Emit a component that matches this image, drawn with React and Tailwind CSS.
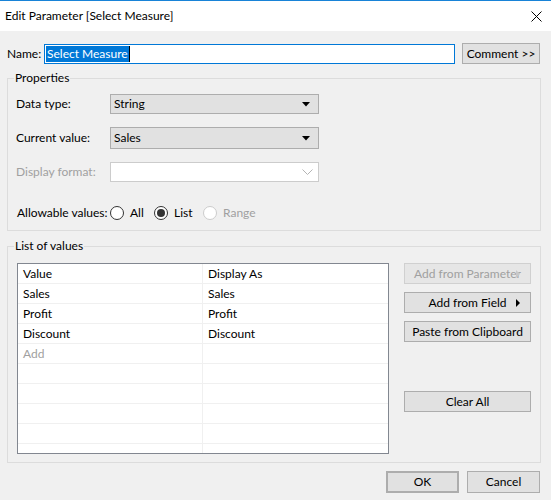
import React from 'react';

const FONT = { fontFamily: 'Lato, "Noto Sans", sans-serif' };

function DownTriangle() {
  return (
    <svg width="8" height="5" viewBox="0 0 8 5">
      <path d="M0 0 H8 L4 4.5 Z" fill="#000" />
    </svg>
  );
}

function Chevron() {
  return (
    <svg width="11" height="7" viewBox="0 0 11 7">
      <path d="M0.5 0.5 L5.5 5.5 L10.5 0.5" fill="none" stroke="#b4b4b4" strokeWidth="1" />
    </svg>
  );
}

function RightTriangle({ color }) {
  return (
    <svg width="4" height="8" viewBox="0 0 4 8">
      <path d="M0 0 L4 4 L0 8 Z" fill={color} />
    </svg>
  );
}

function Radio({ checked, disabled, label, className = '' }) {
  return (
    <label className={`flex items-center gap-[6px] ${className}`}>
      <span
        className={`w-[14px] h-[14px] rounded-full border bg-white flex items-center justify-center ${
          disabled ? 'border-[#cccccc]' : 'border-[#333333]'
        }`}
      >
        {checked && <span className="w-[8px] h-[8px] rounded-full bg-[#333333]" />}
      </span>
      <span className={disabled ? 'text-[#a0a0a0]' : 'text-black'}>{label}</span>
    </label>
  );
}

function Select({ value, className = '' }) {
  return (
    <div className={`w-[209px] h-[20px] border border-[#adadad] bg-[#e1e1e1] flex items-center justify-between pl-[3px] pr-[8px] ${className}`}>
      <span>{value}</span>
      <DownTriangle />
    </div>
  );
}

function Btn({ children, disabled, arrow, className = '' }) {
  return (
    <button
      className={`relative h-[21px] border flex items-center justify-center ${
        disabled
          ? 'border-[#d0d0d0] bg-[#e6e6e6] text-[#a0a0a0]'
          : 'border-[#adadad] bg-[#e1e1e1] text-black'
      } ${className}`}
    >
      {children}
      {arrow && (
        <span className="absolute right-[10px] top-[6px]">
          <RightTriangle color={disabled ? '#c8c8c8' : '#000'} />
        </span>
      )}
    </button>
  );
}

const ROWS = [
  ['Value', 'Display As'],
  ['Sales', 'Sales'],
  ['Profit', 'Profit'],
  ['Discount', 'Discount'],
  ['Add', ''],
  ['', ''],
  ['', ''],
  ['', ''],
  ['', ''],
  ['', ''],
];

export default function App() {
  return (
    <div style={FONT} className="w-[551px] h-[500px] bg-[#f0f0f0] text-[12px] leading-[16px] text-black border-t border-[#1883d7] overflow-hidden">
      {/* Title bar */}
      <div className="h-[30px] bg-white flex items-center justify-between pl-[5px] pr-[9px]">
        <span className="text-[12px]">Edit Parameter [Select Measure]</span>
        <svg width="11" height="11" viewBox="0 0 11 11">
          <path d="M0.5 0.5 L10.5 10.5 M10.5 0.5 L0.5 10.5" stroke="#000" strokeWidth="1" />
        </svg>
      </div>

      <div className="pl-[7px] pr-[10px]">
        {/* Name row */}
        <div className="flex items-center mt-[12px]">
          <span className="w-[37px]">Name:</span>
          <div className="w-[411px] h-[20px] border border-[#0078d7] bg-white flex items-center pl-[1px]">
            <span className="bg-[#0078d7] text-white px-[1px] border-r border-black">Select Measure</span>
          </div>
          <Btn className="ml-[7px] w-[78px] h-[20px]">Comment &gt;&gt;</Btn>
        </div>

        {/* Properties */}
        <fieldset className="mt-[6px] border border-[#dcdcdc] pl-[8px] pb-[9px]">
          <legend className="ml-[-2px] px-[1px]">Properties</legend>
          <div className="flex items-center mt-[8px]">
            <span className="w-[94px]">Data type:</span>
            <Select value="String" />
          </div>
          <div className="flex items-center mt-[13px]">
            <span className="w-[94px]">Current value:</span>
            <Select value="Sales" className="h-[22px]" />
          </div>
          <div className="flex items-center mt-[13px]">
            <span className="w-[94px] text-[#a0a0a0]">Display format:</span>
            <div className="w-[209px] h-[20px] border border-[#cccccc] bg-white flex items-center justify-end pr-[5px]">
              <Chevron />
            </div>
          </div>
          <div className="flex items-center mt-[23px]">
            <span className="w-[94px] pl-[1px]">Allowable values:</span>
            <Radio label="All" className="w-[44px]" />
            <Radio label="List" checked className="w-[49px]" />
            <Radio label="Range" disabled />
          </div>
        </fieldset>

        {/* List of values */}
        <fieldset className="mt-[7px] border border-[#dcdcdc] pl-[9px] pb-[8px]">
          <legend className="ml-[-3px] px-[1px]">List of values</legend>
          <div className="flex mt-[9px]">
            <div className="w-[372px] h-[191px] border border-[#828790] bg-white overflow-hidden">
              {ROWS.map((r, i) => (
                <div key={i} className="h-[20px] flex border-b border-[#f0f0f0]">
                  <div className={`w-[185px] pl-[5px] border-r border-[#f0f0f0] flex items-center ${r[0] === 'Add' ? 'text-[#a0a0a0]' : ''}`}>
                    {r[0]}
                  </div>
                  <div className="flex-1 pl-[5px] flex items-center">{r[1]}</div>
                </div>
              ))}
            </div>
            <div className="ml-[15px] w-[127px] flex flex-col">
              <Btn disabled arrow>Add from Parameter</Btn>
              <Btn arrow className="mt-[8px]">Add from Field</Btn>
              <Btn className="mt-[8px]">Paste from Clipboard</Btn>
              <Btn className="mt-[49px]">Clear All</Btn>
            </div>
          </div>
        </fieldset>

        {/* Footer */}
        <div className="flex justify-end gap-[8px] mt-[8px] pr-[1px]">
          <Btn className="w-[73px] h-[22px] border-2 border-[#0078d7]">OK</Btn>
          <Btn className="w-[73px] h-[22px]">Cancel</Btn>
        </div>
      </div>
    </div>
  );
}
